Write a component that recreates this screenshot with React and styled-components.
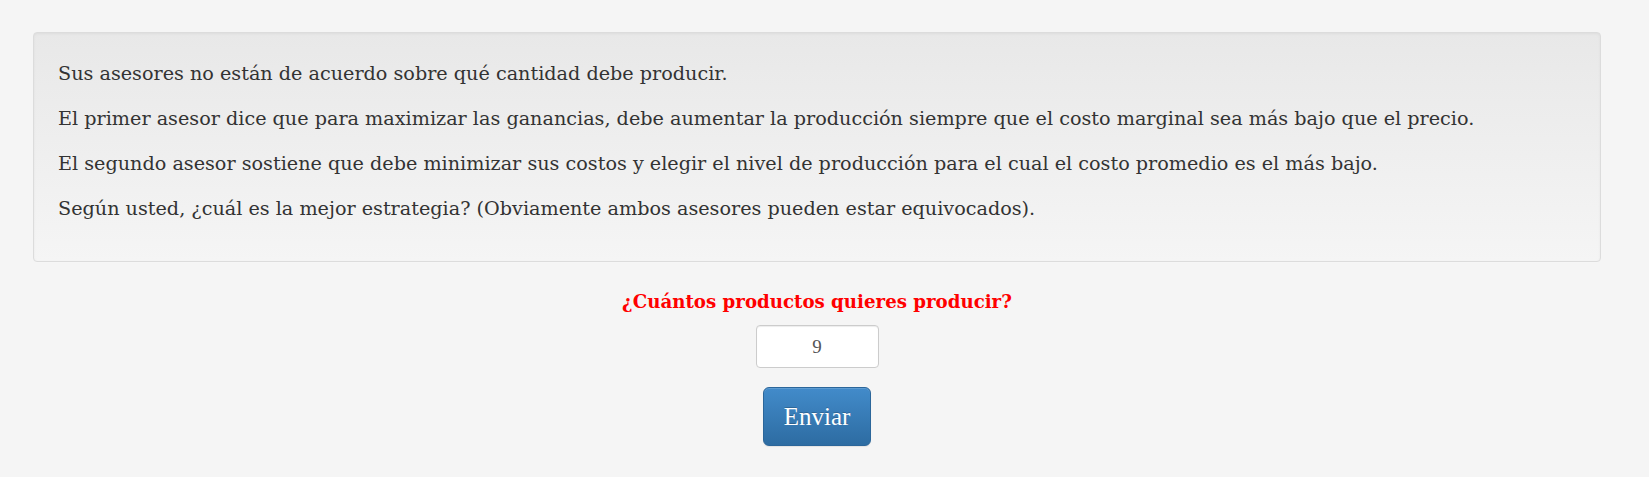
import React from 'react';
import styled, { createGlobalStyle } from 'styled-components';

const GlobalStyle = createGlobalStyle`
  html, body {
    margin: 0;
    padding: 0;
    background: #f5f5f5;
  }
  body {
    font-family: "DejaVu Serif", "Liberation Serif", serif;
    color: #333333;
  }
`;

const Page = styled.div`
  padding: 32px 48px 20px 33px;
`;

const Well = styled.div`
  padding: 26px 24px 22px;
  background-image: linear-gradient(to bottom, #e8e8e8 0, #f5f5f5 100%);
  border: 1px solid #dcdcdc;
  border-radius: 4px;
  box-shadow: inset 0 1px 3px rgba(0, 0, 0, 0.05), 0 1px 0 rgba(255, 255, 255, 0.1);
`;

const Paragraph = styled.p`
  margin: 0 0 15px;
  font-size: 19.2px;
  line-height: 30px;
  color: #333333;
`;

const Form = styled.form`
  display: flex;
  flex-direction: column;
  align-items: center;
  margin-top: 26px;
`;

const Question = styled.label`
  font-size: 18.2px;
  font-weight: bold;
  color: #ff0000;
  line-height: 28px;
  margin-bottom: 9px;
`;

const NumberInput = styled.input`
  width: 123px;
  height: 43px;
  box-sizing: border-box;
  border: 1px solid #cccccc;
  border-radius: 4px;
  background: #ffffff;
  text-align: center;
  font-family: "Liberation Serif", serif;
  font-size: 19px;
  color: #555555;
  box-shadow: inset 0 1px 1px rgba(0, 0, 0, 0.075);
  outline: none;
`;

const SubmitButton = styled.button`
  margin-top: 19px;
  width: 108px;
  height: 59px;
  box-sizing: border-box;
  border: 1px solid #2b669a;
  border-radius: 6px;
  background-image: linear-gradient(to bottom, #428bca 0, #2d6ca2 100%);
  color: #ffffff;
  font-family: "Liberation Serif", serif;
  font-size: 25px;
  cursor: pointer;
  text-shadow: 0 -1px 0 rgba(0, 0, 0, 0.2);
  box-shadow: inset 0 1px 0 rgba(255, 255, 255, 0.15), 0 1px 1px rgba(0, 0, 0, 0.075);
`;

const paragraphs = [
  'Sus asesores no están de acuerdo sobre qué cantidad debe producir.',
  'El primer asesor dice que para maximizar las ganancias, debe aumentar la producción siempre que el costo marginal sea más bajo que el precio.',
  'El segundo asesor sostiene que debe minimizar sus costos y elegir el nivel de producción para el cual el costo promedio es el más bajo.',
  'Según usted, ¿cuál es la mejor estrategia? (Obviamente ambos asesores pueden estar equivocados).',
];

const App = () => (
  <>
    <GlobalStyle />
    <Page>
      <Well>
        {paragraphs.map((text) => (
          <Paragraph key={text}>{text}</Paragraph>
        ))}
      </Well>
      <Form onSubmit={(e) => e.preventDefault()}>
        <Question htmlFor="cantidad">¿Cuántos productos quieres producir?</Question>
        <NumberInput id="cantidad" type="text" defaultValue="9" />
        <SubmitButton type="submit">Enviar</SubmitButton>
      </Form>
    </Page>
  </>
);

export default App;
